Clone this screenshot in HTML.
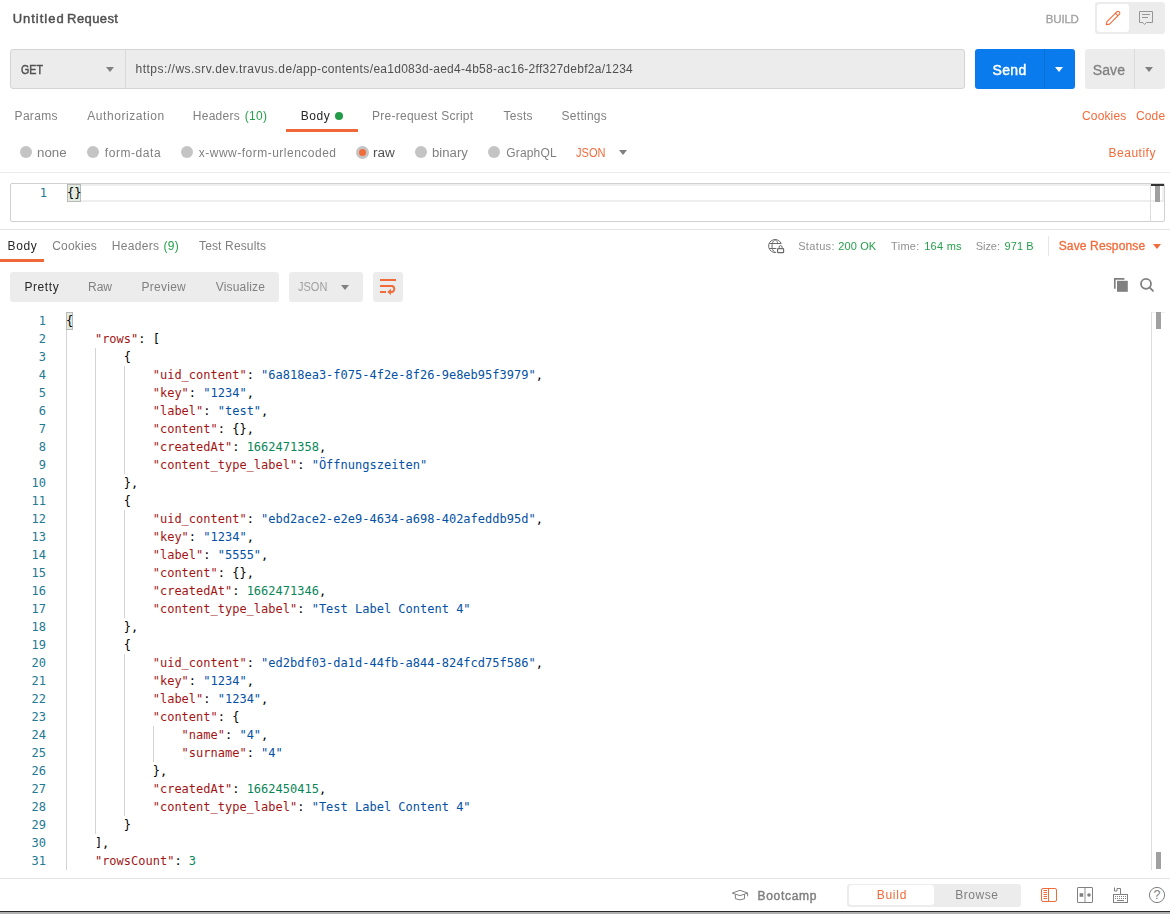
<!DOCTYPE html>
<html lang="en">
<head>
<meta charset="utf-8">
<title>Untitled Request</title>
<style>
html,body{margin:0;padding:0;background:#fff;}
body{width:1170px;height:914px;position:relative;overflow:hidden;font-family:"Liberation Sans",sans-serif;}
.a{position:absolute;}
.t{position:absolute;white-space:pre;}
.box{position:absolute;box-sizing:border-box;}
.hl{position:absolute;height:1px;background:#e6e6e6;}
.radio{position:absolute;width:12px;height:12px;border-radius:50%;background:#c4c4c4;}
.radio.on{width:13px;height:13px;}
.radio.on::after{content:"";position:absolute;left:3px;top:3px;width:7px;height:7px;border-radius:50%;background:#f26b3a;}
.tri{position:absolute;width:0;height:0;border-left:4px solid transparent;border-right:4px solid transparent;border-top:5px solid #808080;}
svg{position:absolute;overflow:visible;}
/* code */
.code{position:absolute;left:0;top:312px;width:1150px;font:12px/18px "DejaVu Sans Mono","Liberation Mono",monospace;color:#000;}
.ln{position:relative;height:18px;white-space:pre;}
.no{position:absolute;left:0;width:46px;text-align:right;color:#237893;}
.cd{position:absolute;left:66px;}
.k{color:#a31515;}.s{color:#0451a5;}.n{color:#098658;}
.guide{position:absolute;width:1px;background:#d3d3d3;}
.bm{position:absolute;box-sizing:border-box;background:#e2ebe0;border:1px solid #b9b9b9;}
</style>
</head>
<body>
<!-- header toggle -->
<div class="box" style="left:1095px;top:2px;width:70px;height:32px;background:#ececec;border-radius:3px;"></div>
<div class="box" style="left:1097px;top:4px;width:32px;height:28px;background:#fff;border-radius:3px;"></div>
<svg style="left:1103px;top:8px" width="20" height="20" viewBox="0 0 20 20" fill="none" stroke="#f26b3a" stroke-width="1.1" stroke-linejoin="round" stroke-linecap="round">
<path d="M3.2 16.8 L4.0 13.6 L13.8 3.8 a1.6 1.6 0 0 1 2.3 0 l0.2 0.2 a1.6 1.6 0 0 1 0 2.3 L6.5 16.1 Z M12.4 5.2 L14.9 7.7"/>
</svg>
<svg style="left:1137px;top:9px" width="18" height="18" viewBox="0 0 18 18" fill="none" stroke="#959595" stroke-width="1">
<path d="M2.5 2.5 H15.5 V13.5 H9.4 L7.6 15.5 L5.8 13.5 H2.5 Z M5 5.5 H13 M5 8.5 H11"/>
</svg>

<!-- url bar -->
<div class="box" style="left:10px;top:49px;width:955px;height:40px;background:#ececec;border:1px solid #d4d4d4;border-radius:3px;"></div>
<div class="a" style="left:125px;top:50px;width:1px;height:38px;background:#d8d8d8;"></div>
<div class="tri" style="left:106px;top:67px;"></div>
<!-- send -->
<div class="box" style="left:975px;top:49px;width:100px;height:40px;background:#097bed;border-radius:3px;"></div>
<div class="a" style="left:1044px;top:49px;width:1px;height:40px;background:#0a6fd4;"></div>
<div class="tri" style="left:1055px;top:67px;border-top-color:#fff;"></div>
<!-- save -->
<div class="box" style="left:1085px;top:49px;width:80px;height:40px;background:#ececec;border-radius:3px;"></div>
<div class="a" style="left:1134px;top:49px;width:1px;height:40px;background:#dcdcdc;"></div>
<div class="tri" style="left:1145px;top:67px;"></div>

<!-- request tabs -->
<div class="a" style="left:335px;top:112px;width:8px;height:8px;border-radius:50%;background:#249c47;"></div>
<div class="a" style="left:286px;top:129px;width:72px;height:3px;background:#f0673a;"></div>

<!-- body type radios -->
<div class="radio" style="left:20px;top:146px;"></div>
<div class="radio" style="left:87px;top:146px;"></div>
<div class="radio" style="left:181px;top:146px;"></div>
<div class="radio on" style="left:356px;top:146px;"></div>
<div class="radio" style="left:415px;top:146px;"></div>
<div class="radio" style="left:488px;top:146px;"></div>
<div class="tri" style="left:619px;top:150px;"></div>
<div class="hl" style="left:0;top:172px;width:1170px;background:#ebebeb;"></div>

<!-- request editor -->
<div class="box" style="left:10px;top:183px;width:1155px;height:39px;border:1px solid #d0d0d0;border-radius:2px;background:#fff;"></div>
<div class="a" style="left:67px;top:184px;width:1084px;height:2px;background:#eee;"></div>
<div class="a" style="left:67px;top:200px;width:1097px;height:2px;background:#eee;"></div>
<div class="a" style="left:1162px;top:186px;width:2px;height:14px;background:#f0f0f0;"></div>
<div class="a" style="left:1150px;top:184px;width:1px;height:37px;background:#dcdcdc;"></div>
<div class="a" style="left:1151px;top:184px;width:13px;height:2px;background:#333;"></div>
<div class="a" style="left:1155px;top:186px;width:5px;height:16px;background:#a0a0a0;"></div>
<div class="bm" style="left:67px;top:184px;width:14px;height:18px;"></div>
<div class="a" style="left:0;top:184px;width:100px;font:12px/18px 'DejaVu Sans Mono','Liberation Mono',monospace;white-space:pre;"><span class="no" style="left:1px">1</span><span class="cd" style="left:67px">{}</span></div>
<div class="hl" style="left:0;top:229px;width:1170px;background:#e4e4e4;"></div>

<!-- response tabs -->
<div class="a" style="left:0;top:259px;width:44px;height:3px;background:#f0673a;"></div>
<!-- globe + lock -->
<svg style="left:766px;top:237px" width="20" height="18" viewBox="0 0 20 18" fill="none" stroke="#6b6b6b" stroke-width="1">
<path d="M10.2 15.4 A6.5 6.5 0 1 1 15.3 7"/>
<path d="M9 2.5 C6.8 4.2 6 6.5 6 9 C6 11.5 6.8 13.8 9 15.5"/>
<path d="M9 2.5 C10.8 3.8 11.7 5.3 12 7"/>
<path d="M3 6.5 H15 M3 11.5 H10.4" stroke-width="1"/>
<rect x="11.6" y="11.7" width="6" height="4" rx="0.6" stroke-width="1.2"/>
<path d="M13.1 11.5 V10.1 a1.5 1.5 0 0 1 3 0 V11.5"/>
</svg>
<div class="a" style="left:1048px;top:236px;width:1px;height:20px;background:#e6e6e6;"></div>
<div class="tri" style="left:1153px;top:244px;border-top-color:#f26b3a;"></div>

<!-- view mode -->
<div class="box" style="left:10px;top:272px;width:269px;height:30px;background:#ececec;border-radius:3px;"></div>
<div class="box" style="left:289px;top:272px;width:74px;height:30px;background:#ececec;border-radius:3px;"></div>
<div class="tri" style="left:341px;top:285px;"></div>
<div class="box" style="left:373px;top:272px;width:30px;height:30px;background:#ececec;border-radius:3px;"></div>
<svg style="left:373px;top:272px" width="30" height="30" viewBox="0 0 30 30" fill="none" stroke="#f26b3a" stroke-width="2">
<path d="M7 8 H23 M7 14 H19.5 a3.4 3.4 0 0 1 0 6 H16.5 M7 20 H13"/>
<path d="M18 16.8 V23 L14.2 19.9 Z" fill="#f26b3a" stroke="none"/>
</svg>
<!-- copy + search -->
<svg style="left:1113px;top:277px" width="16" height="16" viewBox="0 0 16 16">
<path d="M1.8 11.7 V1.8 H11.4" fill="none" stroke="#808080" stroke-width="1.7"/>
<rect x="4" y="3.8" width="10.8" height="11" fill="#808080"/>
</svg>
<svg style="left:1139px;top:277px" width="16" height="16" viewBox="0 0 16 16" fill="none" stroke="#808080" stroke-width="1.8">
<circle cx="7" cy="6.8" r="5"/><path d="M10.8 10.6 L14 13.8" stroke-linecap="round"/>
</svg>

<!-- response code -->
<div class="bm" style="left:66px;top:312px;width:7px;height:18px;"></div>
<div class="guide" style="left:66px;top:330px;height:540px;"></div>
<div class="guide" style="left:95px;top:348px;height:486px;"></div>
<div class="guide" style="left:124px;top:366px;height:108px;"></div>
<div class="guide" style="left:124px;top:510px;height:108px;"></div>
<div class="guide" style="left:124px;top:654px;height:162px;"></div>
<div class="guide" style="left:153px;top:726px;height:36px;"></div>
<div class="code">
<div class="ln"><span class="no">1</span><span class="cd">{</span></div>
<div class="ln"><span class="no">2</span><span class="cd">    <span class="k">&quot;rows&quot;</span>: [</span></div>
<div class="ln"><span class="no">3</span><span class="cd">        {</span></div>
<div class="ln"><span class="no">4</span><span class="cd">            <span class="k">&quot;uid_content&quot;</span>: <span class="s">&quot;6a818ea3-f075-4f2e-8f26-9e8eb95f3979&quot;</span>,</span></div>
<div class="ln"><span class="no">5</span><span class="cd">            <span class="k">&quot;key&quot;</span>: <span class="s">&quot;1234&quot;</span>,</span></div>
<div class="ln"><span class="no">6</span><span class="cd">            <span class="k">&quot;label&quot;</span>: <span class="s">&quot;test&quot;</span>,</span></div>
<div class="ln"><span class="no">7</span><span class="cd">            <span class="k">&quot;content&quot;</span>: {},</span></div>
<div class="ln"><span class="no">8</span><span class="cd">            <span class="k">&quot;createdAt&quot;</span>: <span class="n">1662471358</span>,</span></div>
<div class="ln"><span class="no">9</span><span class="cd">            <span class="k">&quot;content_type_label&quot;</span>: <span class="s">&quot;Öffnungszeiten&quot;</span></span></div>
<div class="ln"><span class="no">10</span><span class="cd">        },</span></div>
<div class="ln"><span class="no">11</span><span class="cd">        {</span></div>
<div class="ln"><span class="no">12</span><span class="cd">            <span class="k">&quot;uid_content&quot;</span>: <span class="s">&quot;ebd2ace2-e2e9-4634-a698-402afeddb95d&quot;</span>,</span></div>
<div class="ln"><span class="no">13</span><span class="cd">            <span class="k">&quot;key&quot;</span>: <span class="s">&quot;1234&quot;</span>,</span></div>
<div class="ln"><span class="no">14</span><span class="cd">            <span class="k">&quot;label&quot;</span>: <span class="s">&quot;5555&quot;</span>,</span></div>
<div class="ln"><span class="no">15</span><span class="cd">            <span class="k">&quot;content&quot;</span>: {},</span></div>
<div class="ln"><span class="no">16</span><span class="cd">            <span class="k">&quot;createdAt&quot;</span>: <span class="n">1662471346</span>,</span></div>
<div class="ln"><span class="no">17</span><span class="cd">            <span class="k">&quot;content_type_label&quot;</span>: <span class="s">&quot;Test Label Content 4&quot;</span></span></div>
<div class="ln"><span class="no">18</span><span class="cd">        },</span></div>
<div class="ln"><span class="no">19</span><span class="cd">        {</span></div>
<div class="ln"><span class="no">20</span><span class="cd">            <span class="k">&quot;uid_content&quot;</span>: <span class="s">&quot;ed2bdf03-da1d-44fb-a844-824fcd75f586&quot;</span>,</span></div>
<div class="ln"><span class="no">21</span><span class="cd">            <span class="k">&quot;key&quot;</span>: <span class="s">&quot;1234&quot;</span>,</span></div>
<div class="ln"><span class="no">22</span><span class="cd">            <span class="k">&quot;label&quot;</span>: <span class="s">&quot;1234&quot;</span>,</span></div>
<div class="ln"><span class="no">23</span><span class="cd">            <span class="k">&quot;content&quot;</span>: {</span></div>
<div class="ln"><span class="no">24</span><span class="cd">                <span class="k">&quot;name&quot;</span>: <span class="s">&quot;4&quot;</span>,</span></div>
<div class="ln"><span class="no">25</span><span class="cd">                <span class="k">&quot;surname&quot;</span>: <span class="s">&quot;4&quot;</span></span></div>
<div class="ln"><span class="no">26</span><span class="cd">            },</span></div>
<div class="ln"><span class="no">27</span><span class="cd">            <span class="k">&quot;createdAt&quot;</span>: <span class="n">1662450415</span>,</span></div>
<div class="ln"><span class="no">28</span><span class="cd">            <span class="k">&quot;content_type_label&quot;</span>: <span class="s">&quot;Test Label Content 4&quot;</span></span></div>
<div class="ln"><span class="no">29</span><span class="cd">        }</span></div>
<div class="ln"><span class="no">30</span><span class="cd">    ],</span></div>
<div class="ln"><span class="no">31</span><span class="cd">    <span class="k">&quot;rowsCount&quot;</span>: <span class="n">3</span></span></div>
</div>
<div class="a" style="left:1151px;top:312px;width:14px;height:1px;background:#f0f0f0;"></div>
<div class="a" style="left:1151px;top:312px;width:1px;height:558px;background:#dcdcdc;"></div>
<div class="a" style="left:1156px;top:312px;width:5px;height:17px;background:#a0a0a0;"></div>
<div class="a" style="left:1156px;top:852px;width:5px;height:17px;background:#a0a0a0;"></div>

<!-- status bar -->
<div class="hl" style="left:0;top:878px;width:1170px;background:#e4e4e4;"></div>
<svg style="left:732px;top:888px" width="18" height="14" viewBox="0 0 18 14" fill="none" stroke="#808080" stroke-width="1" stroke-linejoin="round">
<path d="M3.4 6.2 L0.3 5.1 L8 2.3 L15.6 5 L12.5 6.2 M3.4 6.2 Q8 9 12.5 6.2 M3.4 6.2 V10.7 Q8 13 12.5 10.7 V6.2 M15.6 5 V8.3"/>
</svg>
<div class="box" style="left:847px;top:884px;width:174px;height:23px;background:#ececec;border-radius:3px;"></div>
<div class="box" style="left:849px;top:885px;width:85px;height:20px;background:#fff;border-radius:3px;"></div>
<!-- two-pane -->
<svg style="left:1040px;top:886px" width="18" height="18" viewBox="0 0 18 18" fill="none" stroke="#f26b3a" stroke-width="1">
<rect x="1.5" y="2.5" width="15" height="13" rx="1.5"/><path d="M8.5 2.5 V15.5 M3.5 4.5 H7 M3.5 6.5 H7 M3.5 8.5 H7 M3.5 10.5 H7 M3.5 12.5 H7"/>
</svg>
<svg style="left:1076px;top:886px" width="18" height="18" viewBox="0 0 18 18" fill="none" stroke="#808080" stroke-width="1">
<rect x="1.5" y="1.5" width="15" height="15" rx="0.5"/><path d="M9 2 V16" stroke="#c8c8c8" stroke-width="2"/>
<rect x="3.6" y="7.2" width="3.6" height="3.6" fill="#808080" stroke="none"/><circle cx="13" cy="9" r="1.8" fill="#808080" stroke="none"/>
</svg>
<svg style="left:1112px;top:886px" width="18" height="18" viewBox="0 0 18 18" fill="none" stroke="#808080" stroke-width="1">
<rect x="1.5" y="8.5" width="14" height="8"/><path d="M2.5 1.5 V5 H5 V2.5 H8.5 V8.5"/>
<path d="M3 10.5 H14 M3 12.5 H14" stroke-dasharray="1 1"/><path d="M5 14.5 H12"/>
</svg>
<svg style="left:1148px;top:886px" width="18" height="18" viewBox="0 0 18 18" fill="none" stroke="#808080" stroke-width="1">
<circle cx="9" cy="9" r="7.6"/>
<text x="9" y="13.4" text-anchor="middle" font-family="Liberation Sans, sans-serif" font-size="12.5" fill="#808080" stroke="none">?</text>
</svg>
<div class="a" style="left:0;top:911px;width:1170px;height:1px;background:#2a2a2a;"></div>
<div class="a" style="left:0;top:912px;width:1170px;height:2px;background:#b0b0b0;"></div>

<!-- text -->
<div class="a" style="left:0;top:0;width:1170px;height:914px;will-change:transform;">
<span class="t" style="left:12.70px;top:11.8px;font:400 13px/13px 'Liberation Sans',sans-serif;color:#505050;letter-spacing:0.979px;-webkit-text-stroke:0.45px #505050">Untitled</span>
<span class="t" style="left:67.10px;top:11.8px;font:400 13px/13px 'Liberation Sans',sans-serif;color:#505050;letter-spacing:0.395px;-webkit-text-stroke:0.45px #505050">Request</span>
<span class="t" style="left:1045.80px;top:14.0px;font:400 11.5px/11.5px 'Liberation Sans',sans-serif;color:#a0a0a0;letter-spacing:-0.197px;-webkit-text-stroke:0.3px #a0a0a0">BUILD</span>
<span class="t" style="left:21.03px;top:64.0px;font:400 12px/12px 'Liberation Sans',sans-serif;color:#505050;letter-spacing:0.000px;transform:scaleX(0.8889);transform-origin:0 0;-webkit-text-stroke:0.45px #505050">GET</span>
<span class="t" style="left:135.50px;top:63.2px;font:400 12px/12px 'Liberation Sans',sans-serif;color:#505050;letter-spacing:0.484px">https://ws.srv.dev.travus.de/</span>
<span class="t" style="left:295.97px;top:63.2px;font:400 12px/12px 'Liberation Sans',sans-serif;color:#505050;letter-spacing:0.357px">app-contents/</span>
<span class="t" style="left:373.40px;top:63.2px;font:400 12px/12px 'Liberation Sans',sans-serif;color:#505050;letter-spacing:0.268px">ea1d083d-aed4-4b58-ac16-2ff327debf2a/1234</span>
<span class="t" style="left:992.54px;top:62.8px;font:400 14px/14px 'Liberation Sans',sans-serif;color:#ffffff;letter-spacing:0.320px;-webkit-text-stroke:0.45px #ffffff">Send</span>
<span class="t" style="left:1092.68px;top:62.8px;font:400 14px/14px 'Liberation Sans',sans-serif;color:#808080;letter-spacing:0.137px;-webkit-text-stroke:0.3px #808080">Save</span>
<span class="t" style="left:14.60px;top:110.0px;font:400 12px/12px 'Liberation Sans',sans-serif;color:#808080;letter-spacing:0.301px">Params</span>
<span class="t" style="left:87.25px;top:110.0px;font:400 12px/12px 'Liberation Sans',sans-serif;color:#808080;letter-spacing:0.571px">Authorization</span>
<span class="t" style="left:192.80px;top:110.0px;font:400 12px/12px 'Liberation Sans',sans-serif;color:#808080;letter-spacing:0.268px">Headers</span>
<span class="t" style="left:244.80px;top:110.0px;font:400 12px/12px 'Liberation Sans',sans-serif;color:#26a04b;letter-spacing:0.300px">(10)</span>
<span class="t" style="left:300.80px;top:110.0px;font:400 12px/12px 'Liberation Sans',sans-serif;color:#282828;letter-spacing:0.500px">Body</span>
<span class="t" style="left:372.10px;top:110.0px;font:400 12px/12px 'Liberation Sans',sans-serif;color:#808080;letter-spacing:0.251px">Pre-request Script</span>
<span class="t" style="left:503.60px;top:110.0px;font:400 12px/12px 'Liberation Sans',sans-serif;color:#808080;letter-spacing:0.219px">Tests</span>
<span class="t" style="left:561.60px;top:110.0px;font:400 12px/12px 'Liberation Sans',sans-serif;color:#808080;letter-spacing:0.258px">Settings</span>
<span class="t" style="left:1082.00px;top:109.8px;font:400 12px/12px 'Liberation Sans',sans-serif;color:#f26b3a;letter-spacing:0.152px">Cookies</span>
<span class="t" style="left:1135.90px;top:109.8px;font:400 12px/12px 'Liberation Sans',sans-serif;color:#f26b3a;letter-spacing:0.168px">Code</span>
<span class="t" style="left:37.39px;top:147.0px;font:400 12px/12px 'Liberation Sans',sans-serif;color:#808080;letter-spacing:0.000px;transform:scaleX(1.1080);transform-origin:0 0">none</span>
<span class="t" style="left:104.78px;top:147.0px;font:400 12px/12px 'Liberation Sans',sans-serif;color:#808080;letter-spacing:0.566px">form-data</span>
<span class="t" style="left:198.78px;top:147.0px;font:400 12px/12px 'Liberation Sans',sans-serif;color:#808080;letter-spacing:0.492px">x-www-form-urlencoded</span>
<span class="t" style="left:373.17px;top:147.0px;font:400 12px/12px 'Liberation Sans',sans-serif;color:#505050;letter-spacing:0.000px;transform:scaleX(1.1279);transform-origin:0 0">raw</span>
<span class="t" style="left:432.40px;top:147.0px;font:400 12px/12px 'Liberation Sans',sans-serif;color:#808080;letter-spacing:0.000px;transform:scaleX(1.0976);transform-origin:0 0">binary</span>
<span class="t" style="left:506.30px;top:147.0px;font:400 12px/12px 'Liberation Sans',sans-serif;color:#808080;letter-spacing:0.151px">GraphQL</span>
<span class="t" style="left:575.74px;top:147.0px;font:400 12px/12px 'Liberation Sans',sans-serif;color:#f26b3a;letter-spacing:0.000px;transform:scaleX(0.9213);transform-origin:0 0">JSON</span>
<span class="t" style="left:1108.50px;top:147.0px;font:400 12px/12px 'Liberation Sans',sans-serif;color:#f26b3a;letter-spacing:0.514px">Beautify</span>
<span class="t" style="left:7.50px;top:239.8px;font:400 12px/12px 'Liberation Sans',sans-serif;color:#282828;letter-spacing:0.667px">Body</span>
<span class="t" style="left:52.20px;top:239.8px;font:400 12px/12px 'Liberation Sans',sans-serif;color:#808080;letter-spacing:0.202px">Cookies</span>
<span class="t" style="left:111.80px;top:239.8px;font:400 12px/12px 'Liberation Sans',sans-serif;color:#808080;letter-spacing:0.318px">Headers</span>
<span class="t" style="left:163.60px;top:239.8px;font:400 12px/12px 'Liberation Sans',sans-serif;color:#26a04b;letter-spacing:0.200px">(9)</span>
<span class="t" style="left:199.00px;top:239.8px;font:400 12px/12px 'Liberation Sans',sans-serif;color:#808080;letter-spacing:0.146px">Test Results</span>
<span class="t" style="left:798.20px;top:240.8px;font:400 11px/11px 'Liberation Sans',sans-serif;color:#909090;letter-spacing:0.348px">Status:</span>
<span class="t" style="left:838.37px;top:240.8px;font:400 11px/11px 'Liberation Sans',sans-serif;color:#26a04b;letter-spacing:0.095px">200 OK</span>
<span class="t" style="left:891.11px;top:240.8px;font:400 11px/11px 'Liberation Sans',sans-serif;color:#909090;letter-spacing:0.271px">Time:</span>
<span class="t" style="left:924.22px;top:240.8px;font:400 11px/11px 'Liberation Sans',sans-serif;color:#26a04b;letter-spacing:0.258px">164 ms</span>
<span class="t" style="left:975.80px;top:240.8px;font:400 11px/11px 'Liberation Sans',sans-serif;color:#909090;letter-spacing:-0.074px">Size:</span>
<span class="t" style="left:1004.48px;top:240.8px;font:400 11px/11px 'Liberation Sans',sans-serif;color:#26a04b;letter-spacing:0.109px">971 B</span>
<span class="t" style="left:1058.70px;top:239.8px;font:400 12px/12px 'Liberation Sans',sans-serif;color:#f26b3a;letter-spacing:0.142px;-webkit-text-stroke:0.3px #f26b3a">Save Response</span>
<span class="t" style="left:24.50px;top:280.7px;font:400 12px/12px 'Liberation Sans',sans-serif;color:#282828;letter-spacing:0.560px">Pretty</span>
<span class="t" style="left:88.10px;top:280.7px;font:400 12px/12px 'Liberation Sans',sans-serif;color:#808080;letter-spacing:-0.094px">Raw</span>
<span class="t" style="left:141.60px;top:280.7px;font:400 12px/12px 'Liberation Sans',sans-serif;color:#808080;letter-spacing:0.247px">Preview</span>
<span class="t" style="left:215.73px;top:280.7px;font:400 12px/12px 'Liberation Sans',sans-serif;color:#808080;letter-spacing:0.172px">Visualize</span>
<span class="t" style="left:298.34px;top:280.7px;font:400 12px/12px 'Liberation Sans',sans-serif;color:#a0a0a0;letter-spacing:0.000px;transform:scaleX(0.9180);transform-origin:0 0">JSON</span>
<span class="t" style="left:757.50px;top:889.8px;font:400 12px/12px 'Liberation Sans',sans-serif;color:#808080;letter-spacing:0.710px;-webkit-text-stroke:0.45px #808080">Bootcamp</span>
<span class="t" style="left:876.70px;top:889.0px;font:400 12px/12px 'Liberation Sans',sans-serif;color:#f26b3a;letter-spacing:0.740px">Build</span>
<span class="t" style="left:955.20px;top:889.0px;font:400 12px/12px 'Liberation Sans',sans-serif;color:#808080;letter-spacing:0.560px">Browse</span>
</div>
</body>
</html>
